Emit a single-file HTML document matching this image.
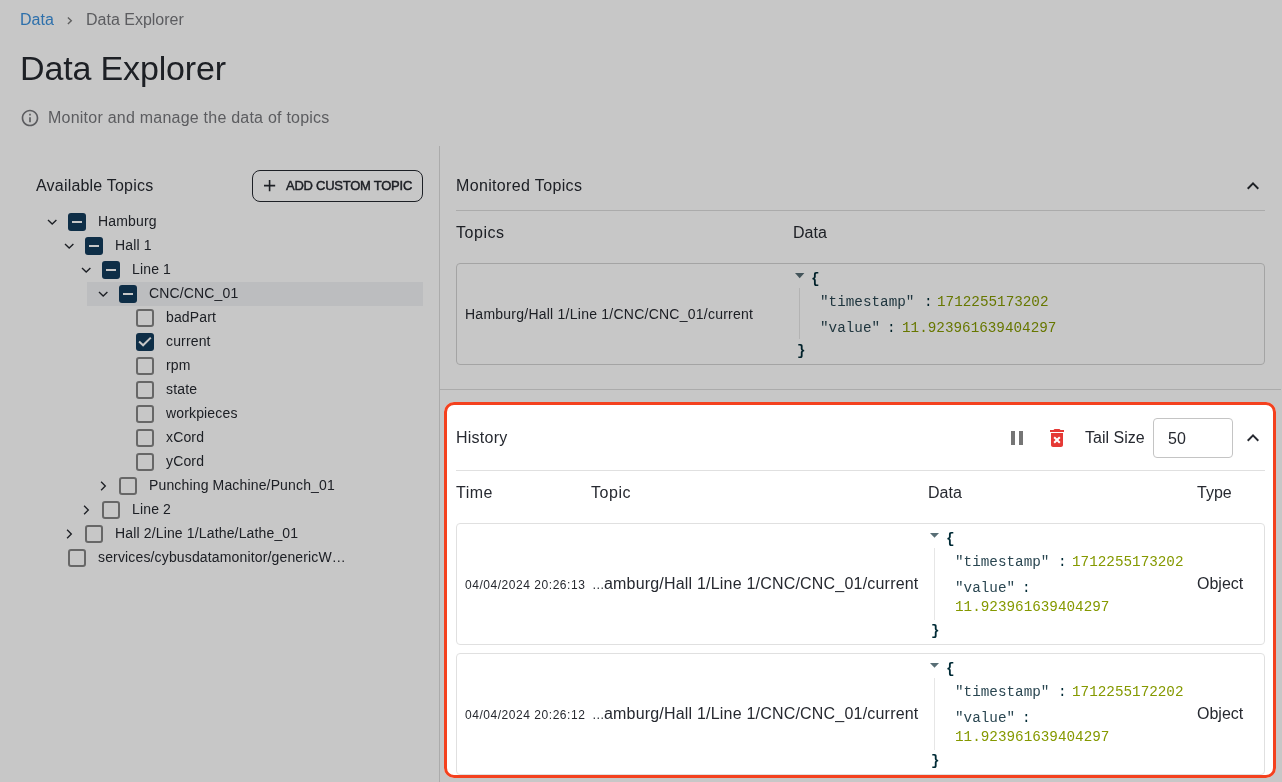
<!DOCTYPE html>
<html><head><meta charset="utf-8">
<style>
html,body{margin:0;padding:0;}
body{width:1282px;height:782px;overflow:hidden;position:relative;background:#fff;font-family:"Liberation Sans",sans-serif;color:#20232b;}
.t{position:absolute;white-space:nowrap;line-height:1;}
.m{position:absolute;white-space:nowrap;line-height:1;font-family:"Liberation Mono",monospace;}
svg{position:absolute;display:block;overflow:visible;}
</style></head>
<body>
<div style="position:absolute;left:0;top:0;width:1282px;height:782px;will-change:transform;">
<div class="t" style="left:20px;top:12.00px;font-size:16px;color:#3b90dc;">Data</div>
<svg style="left:64px;top:14px" width="12" height="12" viewBox="0 0 12 12"><path d="M3.9 3.4 L7.3 6.7 L3.9 10" fill="none" stroke="#7a7a7a" stroke-width="1.4"/></svg>
<div class="t" style="left:86px;top:12.00px;font-size:16px;color:#76777b;">Data Explorer</div>
<div class="t" style="left:20px;top:51.00px;font-size:34px;color:#262930;letter-spacing:-0.15px;">Data Explorer</div>
<svg style="left:20px;top:108px" width="20" height="20" viewBox="0 0 24 24"><path fill="#76777b" d="M11 7h2v2h-2zm0 4h2v6h-2zm1-9C6.48 2 2 6.48 2 12s4.48 10 10 10 10-4.48 10-10S17.52 2 12 2zm0 18c-4.41 0-8-3.59-8-8s3.59-8 8-8 8 3.59 8 8-3.59 8-8 8z"/></svg>
<div class="t" style="left:48px;top:110.00px;font-size:16px;color:#76777b;letter-spacing:0.23px;">Monitor and manage the data of topics</div>
<div class="t" style="left:36px;top:178.00px;font-size:16px;color:#262930;letter-spacing:0.2px;">Available Topics</div>
<div style="position:absolute;left:252px;top:170px;width:171px;height:32px;box-sizing:border-box;border:1px solid #262930;border-radius:8px;"></div>
<svg style="left:263.5px;top:180.2px" width="11.2" height="11.2" viewBox="5 5 14 14"><path fill="#262930" d="M19 13h-6v6h-2v-6H5v-2h6V5h2v6h6v2z"/></svg>
<div class="t" style="left:286px;top:179.00px;font-size:13px;color:#262930;letter-spacing:-0.25px;-webkit-text-stroke:0.45px #262930;">ADD CUSTOM TOPIC</div>
<div style="position:absolute;left:87px;top:282px;width:336px;height:24px;box-sizing:border-box;background:#f1f2f5;"></div>
<svg style="left:0;top:0" width="1" height="1"><path d="M48.00 219.90 L52.20 224.10 L56.40 219.90" fill="none" stroke="#262930" stroke-width="1.35"/></svg>
<div style="position:absolute;left:68px;top:213px;width:18px;height:18px;box-sizing:border-box;background:#133b5b;border-radius:3px;"></div>
<div style="position:absolute;left:72px;top:220.8px;width:10.2px;height:2.4px;box-sizing:border-box;background:#fff;"></div>
<div class="t" style="left:98px;top:214.00px;font-size:14px;color:#262930;letter-spacing:0.15px;">Hamburg</div>
<svg style="left:0;top:0" width="1" height="1"><path d="M65.00 243.90 L69.20 248.10 L73.40 243.90" fill="none" stroke="#262930" stroke-width="1.35"/></svg>
<div style="position:absolute;left:85px;top:237px;width:18px;height:18px;box-sizing:border-box;background:#133b5b;border-radius:3px;"></div>
<div style="position:absolute;left:89px;top:244.8px;width:10.2px;height:2.4px;box-sizing:border-box;background:#fff;"></div>
<div class="t" style="left:115px;top:238.00px;font-size:14px;color:#262930;letter-spacing:0.15px;">Hall 1</div>
<svg style="left:0;top:0" width="1" height="1"><path d="M82.00 267.90 L86.20 272.10 L90.40 267.90" fill="none" stroke="#262930" stroke-width="1.35"/></svg>
<div style="position:absolute;left:102px;top:261px;width:18px;height:18px;box-sizing:border-box;background:#133b5b;border-radius:3px;"></div>
<div style="position:absolute;left:106px;top:268.8px;width:10.2px;height:2.4px;box-sizing:border-box;background:#fff;"></div>
<div class="t" style="left:132px;top:262.00px;font-size:14px;color:#262930;letter-spacing:0.15px;">Line 1</div>
<svg style="left:0;top:0" width="1" height="1"><path d="M99.00 291.90 L103.20 296.10 L107.40 291.90" fill="none" stroke="#262930" stroke-width="1.35"/></svg>
<div style="position:absolute;left:119px;top:285px;width:18px;height:18px;box-sizing:border-box;background:#133b5b;border-radius:3px;"></div>
<div style="position:absolute;left:123px;top:292.8px;width:10.2px;height:2.4px;box-sizing:border-box;background:#fff;"></div>
<div class="t" style="left:149px;top:286.00px;font-size:14px;color:#262930;letter-spacing:0.15px;">CNC/CNC_01</div>
<div style="position:absolute;left:136px;top:309px;width:18px;height:18px;box-sizing:border-box;border:2px solid #858585;border-radius:3px;"></div>
<div class="t" style="left:166px;top:310.00px;font-size:14px;color:#262930;letter-spacing:0.15px;">badPart</div>
<div style="position:absolute;left:136px;top:333px;width:18px;height:18px;box-sizing:border-box;background:#133b5b;border-radius:3px;"></div>
<svg style="left:136px;top:333px" width="18" height="18" viewBox="0 0 18 18"><path d="M3.1 8.6 L7.1 12.3 L14.8 4.6" fill="none" stroke="#fff" stroke-width="2"/></svg>
<div class="t" style="left:166px;top:334.00px;font-size:14px;color:#262930;letter-spacing:0.15px;">current</div>
<div style="position:absolute;left:136px;top:357px;width:18px;height:18px;box-sizing:border-box;border:2px solid #858585;border-radius:3px;"></div>
<div class="t" style="left:166px;top:358.00px;font-size:14px;color:#262930;letter-spacing:0.15px;">rpm</div>
<div style="position:absolute;left:136px;top:381px;width:18px;height:18px;box-sizing:border-box;border:2px solid #858585;border-radius:3px;"></div>
<div class="t" style="left:166px;top:382.00px;font-size:14px;color:#262930;letter-spacing:0.15px;">state</div>
<div style="position:absolute;left:136px;top:405px;width:18px;height:18px;box-sizing:border-box;border:2px solid #858585;border-radius:3px;"></div>
<div class="t" style="left:166px;top:406.00px;font-size:14px;color:#262930;letter-spacing:0.15px;">workpieces</div>
<div style="position:absolute;left:136px;top:429px;width:18px;height:18px;box-sizing:border-box;border:2px solid #858585;border-radius:3px;"></div>
<div class="t" style="left:166px;top:430.00px;font-size:14px;color:#262930;letter-spacing:0.15px;">xCord</div>
<div style="position:absolute;left:136px;top:453px;width:18px;height:18px;box-sizing:border-box;border:2px solid #858585;border-radius:3px;"></div>
<div class="t" style="left:166px;top:454.00px;font-size:14px;color:#262930;letter-spacing:0.15px;">yCord</div>
<svg style="left:0;top:0" width="1" height="1"><path d="M101.10 481.80 L105.30 486.00 L101.10 490.20" fill="none" stroke="#262930" stroke-width="1.35"/></svg>
<div style="position:absolute;left:119px;top:477px;width:18px;height:18px;box-sizing:border-box;border:2px solid #858585;border-radius:3px;"></div>
<div class="t" style="left:149px;top:478.00px;font-size:14px;color:#262930;letter-spacing:0.15px;">Punching Machine/Punch_01</div>
<svg style="left:0;top:0" width="1" height="1"><path d="M84.10 505.80 L88.30 510.00 L84.10 514.20" fill="none" stroke="#262930" stroke-width="1.35"/></svg>
<div style="position:absolute;left:102px;top:501px;width:18px;height:18px;box-sizing:border-box;border:2px solid #858585;border-radius:3px;"></div>
<div class="t" style="left:132px;top:502.00px;font-size:14px;color:#262930;letter-spacing:0.15px;">Line 2</div>
<svg style="left:0;top:0" width="1" height="1"><path d="M67.10 529.80 L71.30 534.00 L67.10 538.20" fill="none" stroke="#262930" stroke-width="1.35"/></svg>
<div style="position:absolute;left:85px;top:525px;width:18px;height:18px;box-sizing:border-box;border:2px solid #858585;border-radius:3px;"></div>
<div class="t" style="left:115px;top:526.00px;font-size:14px;color:#262930;letter-spacing:0.15px;">Hall 2/Line 1/Lathe/Lathe_01</div>
<div style="position:absolute;left:68px;top:549px;width:18px;height:18px;box-sizing:border-box;border:2px solid #858585;border-radius:3px;"></div>
<div class="t" style="left:98px;top:550.00px;font-size:14px;color:#262930;letter-spacing:0.15px;">services/cybusdatamonitor/genericW…</div>
<div style="position:absolute;left:439px;top:146px;width:1px;height:636px;box-sizing:border-box;background:#dcdcdc;"></div>
<div class="t" style="left:456px;top:178.00px;font-size:16px;color:#262930;letter-spacing:0.35px;">Monitored Topics</div>
<svg style="left:1241px;top:174px" width="24" height="24" viewBox="0 0 24 24"><path fill="#262930" d="M12 8l-6 6 1.41 1.41L12 10.83l4.59 4.58L18 14z"/></svg>
<div style="position:absolute;left:456px;top:210px;width:809px;height:1px;box-sizing:border-box;background:#dcdcdc;"></div>
<div class="t" style="left:456px;top:225.00px;font-size:16px;color:#262930;letter-spacing:0.55px;">Topics</div>
<div class="t" style="left:793px;top:225.00px;font-size:16px;color:#262930;">Data</div>
<div style="position:absolute;left:456px;top:263px;width:809px;height:102px;box-sizing:border-box;border:1px solid #d2d2d2;border-radius:4px;"></div>
<div class="t" style="left:465px;top:307.00px;font-size:14px;color:#262930;letter-spacing:0.24px;">Hamburg/Hall 1/Line 1/CNC/CNC_01/current</div>
<svg style="left:795px;top:272.6px" width="9.4" height="5.2" viewBox="0 0 9 5" preserveAspectRatio="none"><path d="M0 0H9L4.5 5z" fill="#586e75"/></svg>
<div class="m" style="left:811px;top:272.00px;font-size:14.3px;color:#002b36;font-weight:bold;">{</div>
<div style="position:absolute;left:799px;top:288px;width:1px;height:51px;box-sizing:border-box;background:#e6e6e6;"></div>
<div class="m" style="left:820px;top:295.00px;font-size:14.3px;color:#2a4651;">"timestamp"</div>
<div class="m" style="left:924px;top:295.00px;font-size:14.3px;color:#002b36;">:</div>
<div class="m" style="left:937px;top:295.00px;font-size:14.3px;color:#859900;">1712255173202</div>
<div class="m" style="left:820px;top:321.00px;font-size:14.3px;color:#2a4651;">"value"</div>
<div class="m" style="left:887px;top:321.00px;font-size:14.3px;color:#002b36;">:</div>
<div class="m" style="left:902px;top:321.00px;font-size:14.3px;color:#859900;">11.923961639404297</div>
<div class="m" style="left:797px;top:344.00px;font-size:14.3px;color:#002b36;font-weight:bold;">}</div>
<div style="position:absolute;left:440px;top:389px;width:841px;height:1px;box-sizing:border-box;background:#dcdcdc;"></div>
<div class="t" style="left:456px;top:430.00px;font-size:16px;color:#262930;letter-spacing:0.25px;">History</div>
<svg style="left:1005px;top:426px" width="24" height="24" viewBox="0 0 24 24"><path fill="#757575" d="M6 19h4V5H6v14zm8-14v14h4V5h-4z"/></svg>
<svg style="left:1045px;top:426px" width="24" height="24" viewBox="0 0 24 24"><path fill="#e53935" d="M6 19c0 1.1.9 2 2 2h8c1.1 0 2-.9 2-2V7H6v12zm2.46-7.12l1.41-1.41L12 12.59l2.12-2.12 1.41 1.41L13.41 14l2.12 2.12-1.41 1.41L12 15.41l-2.12 2.12-1.41-1.41L10.59 14l-2.13-2.12zM15.5 4l-1-1h-5l-1 1H5v2h14V4z"/></svg>
<div class="t" style="left:1085px;top:430.00px;font-size:16px;color:#262930;">Tail Size</div>
<div style="position:absolute;left:1153px;top:418px;width:80px;height:40px;box-sizing:border-box;border:1px solid #c4c4c4;border-radius:4px;"></div>
<div class="t" style="left:1168px;top:431.00px;font-size:16px;color:#262930;">50</div>
<svg style="left:1241px;top:426px" width="24" height="24" viewBox="0 0 24 24"><path fill="#262930" d="M12 8l-6 6 1.41 1.41L12 10.83l4.59 4.58L18 14z"/></svg>
<div style="position:absolute;left:456px;top:470px;width:809px;height:1px;box-sizing:border-box;background:#e0e0e0;"></div>
<div class="t" style="left:456px;top:485.00px;font-size:16px;color:#262930;letter-spacing:0.5px;">Time</div>
<div class="t" style="left:591px;top:485.00px;font-size:16px;color:#262930;letter-spacing:0.55px;">Topic</div>
<div class="t" style="left:928px;top:485.00px;font-size:16px;color:#262930;">Data</div>
<div class="t" style="left:1197px;top:485.00px;font-size:16px;color:#262930;">Type</div>
<div style="position:absolute;left:456px;top:523px;width:809px;height:122px;box-sizing:border-box;border:1px solid #e0e0e0;border-radius:4px;"></div>
<div class="t" style="left:465px;top:579.00px;font-size:12px;color:#262930;letter-spacing:0.54px;">04/04/2024 20:26:13</div>
<div class="t" style="left:592px;top:576.00px;font-size:16px;color:#262930;letter-spacing:0.2px;"><span style="font-size:12.5px;letter-spacing:-0.6px">…</span>amburg/Hall 1/Line 1/CNC/CNC_01/current</div>
<svg style="left:930.3px;top:533px" width="9" height="4.7" viewBox="0 0 9 5" preserveAspectRatio="none"><path d="M0 0H9L4.5 5z" fill="#586e75"/></svg>
<div class="m" style="left:946px;top:532.00px;font-size:14.3px;color:#002b36;font-weight:bold;">{</div>
<div style="position:absolute;left:934px;top:548px;width:1px;height:72px;box-sizing:border-box;background:#e6e6e6;"></div>
<div class="m" style="left:955px;top:555.00px;font-size:14.3px;color:#2a4651;">"timestamp"</div>
<div class="m" style="left:1058px;top:555.00px;font-size:14.3px;color:#002b36;">:</div>
<div class="m" style="left:1072px;top:555.00px;font-size:14.3px;color:#859900;">1712255173202</div>
<div class="m" style="left:955px;top:581.00px;font-size:14.3px;color:#2a4651;">"value"</div>
<div class="m" style="left:1022px;top:581.00px;font-size:14.3px;color:#002b36;">:</div>
<div class="m" style="left:955px;top:600.00px;font-size:14.3px;color:#859900;">11.923961639404297</div>
<div class="m" style="left:931px;top:624.00px;font-size:14.3px;color:#002b36;font-weight:bold;">}</div>
<div class="t" style="left:1197px;top:576.00px;font-size:16px;color:#262930;">Object</div>
<div style="position:absolute;left:456px;top:653px;width:809px;height:122px;box-sizing:border-box;border:1px solid #e0e0e0;border-radius:4px;"></div>
<div class="t" style="left:465px;top:709.00px;font-size:12px;color:#262930;letter-spacing:0.54px;">04/04/2024 20:26:12</div>
<div class="t" style="left:592px;top:706.00px;font-size:16px;color:#262930;letter-spacing:0.2px;"><span style="font-size:12.5px;letter-spacing:-0.6px">…</span>amburg/Hall 1/Line 1/CNC/CNC_01/current</div>
<svg style="left:930.3px;top:663px" width="9" height="4.7" viewBox="0 0 9 5" preserveAspectRatio="none"><path d="M0 0H9L4.5 5z" fill="#586e75"/></svg>
<div class="m" style="left:946px;top:662.00px;font-size:14.3px;color:#002b36;font-weight:bold;">{</div>
<div style="position:absolute;left:934px;top:678px;width:1px;height:72px;box-sizing:border-box;background:#e6e6e6;"></div>
<div class="m" style="left:955px;top:685.00px;font-size:14.3px;color:#2a4651;">"timestamp"</div>
<div class="m" style="left:1058px;top:685.00px;font-size:14.3px;color:#002b36;">:</div>
<div class="m" style="left:1072px;top:685.00px;font-size:14.3px;color:#859900;">1712255172202</div>
<div class="m" style="left:955px;top:711.00px;font-size:14.3px;color:#2a4651;">"value"</div>
<div class="m" style="left:1022px;top:711.00px;font-size:14.3px;color:#002b36;">:</div>
<div class="m" style="left:955px;top:730.00px;font-size:14.3px;color:#859900;">11.923961639404297</div>
<div class="m" style="left:931px;top:754.00px;font-size:14.3px;color:#002b36;font-weight:bold;">}</div>
<div class="t" style="left:1197px;top:706.00px;font-size:16px;color:#262930;">Object</div>
<div style="position:absolute;left:444px;top:402px;width:832px;height:376px;box-sizing:border-box;border:3px solid #f4411e;border-radius:10px;box-shadow:0 0 0 3000px rgba(0,0,0,0.22);"></div>
</div>
</body></html>
